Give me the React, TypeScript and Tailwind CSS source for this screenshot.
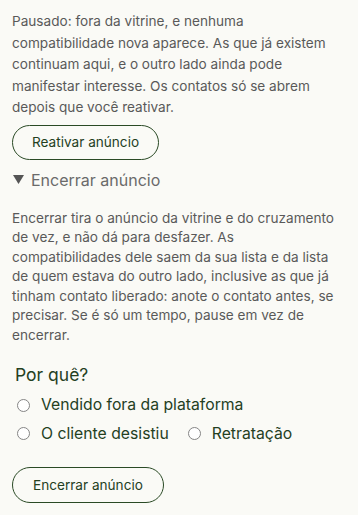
import React, { useState } from 'react';

const reasons = [
  ['vendido', 'Vendido fora da plataforma'],
  ['desistiu', 'O cliente desistiu'],
  ['retratacao', 'Retratação'],
];

const Radio: React.FC<{ label: string; checked: boolean; onPick: () => void }> = ({ label, checked, onPick }) => (
  <label className="flex items-center cursor-pointer" onClick={onPick}>
    <span className="ml-[5px] mr-[11px] w-[13px] h-[13px] rounded-full border border-[#858585] bg-white flex items-center justify-center">
      {checked && <span className="w-[7px] h-[7px] rounded-full bg-[#1f3b1c]" />}
    </span>
    <span className="text-[15.75px] leading-[24px] text-[#24401f]">{label}</span>
  </label>
);

const App: React.FC = () => {
  const [reason, setReason] = useState('');

  return (
    <div className="min-h-screen bg-[#fafaf6] px-3 pt-[11px] pb-4" style={{ fontFamily: 'Inter, "Noto Sans", sans-serif' }}>
      {/* Paused info */}
      <p className="text-[13.6px] leading-[21.5px] text-[#595959]">
        Pausado: fora da vitrine, e nenhuma compatibilidade nova aparece. As que já existem continuam aqui, e o
        outro lado ainda pode manifestar interesse. Os contatos só se abrem depois que você reativar.
      </p>

      <button className="mt-[6px] h-[35px] px-[19px] rounded-full border border-[#2a4a25] text-[13.6px] text-[#24401f]">
        Reativar anúncio
      </button>

      {/* Close section */}
      <div className="mt-[8px] flex items-center text-[16px] text-[#6a6a6a]">
        <svg width="11" height="9" viewBox="0 0 11 9" className="ml-[1px] mr-[7px]">
          <path d="M0 0 H11 L5.5 9 Z" fill="#555" />
        </svg>
        Encerrar anúncio
      </div>

      <p className="mt-[17px] text-[13.6px] leading-[19.5px] text-[#595959]">
        Encerrar tira o anúncio da vitrine e do cruzamento de vez, e não dá para desfazer. As compatibilidades dele
        saem da sua lista e da lista de quem estava do outro lado, inclusive as que já tinham contato liberado: anote o
        contato antes, se precisar. Se é só um tempo, pause em vez de encerrar.
      </p>

      <div className="mt-[17px] pl-[3px] text-[17.5px] text-[#24401f]">Por quê?</div>

      <div className="mt-[5px] flex flex-col gap-[4.5px]">
        <Radio label={reasons[0][1]} checked={reason === reasons[0][0]} onPick={() => setReason(reasons[0][0])} />
        <div className="flex items-center gap-[14px]">
          <Radio label={reasons[1][1]} checked={reason === reasons[1][0]} onPick={() => setReason(reasons[1][0])} />
          <Radio label={reasons[2][1]} checked={reason === reasons[2][0]} onPick={() => setReason(reasons[2][0])} />
        </div>
      </div>

      <button className="mt-[21px] h-[36px] px-[20px] rounded-full border border-[#2a4a25] text-[13.6px] text-[#24401f]">
        Encerrar anúncio
      </button>
    </div>
  );
};

export default App;
